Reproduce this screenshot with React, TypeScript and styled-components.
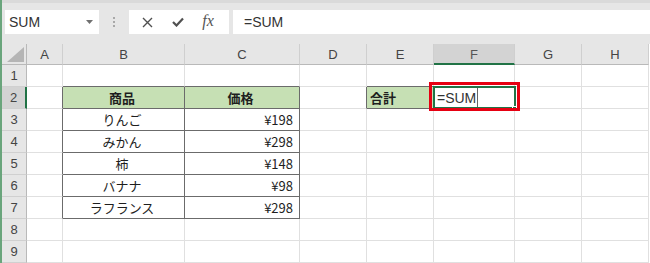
import React from "react";
import styled, { createGlobalStyle, css } from "styled-components";

const Global = createGlobalStyle`
  html, body { margin: 0; padding: 0; background: #ffffff; }
  body { width: 650px; height: 263px; overflow: hidden; }
`;

const Window = styled.div`
  display: flex;
  flex-direction: column;
  width: 650px;
  height: 263px;
  border-left: 2px solid #6aa57c;
  box-sizing: border-box;
  overflow: hidden;
  font-family: "Liberation Sans", Arial, sans-serif;
`;

const Toolbar = styled.div`
  display: flex;
  align-items: stretch;
  height: 44px;
  box-sizing: border-box;
  background: #e6e6e6;
  border-top: 3px solid #dadada;
  padding: 7px 0 10px 3px;
`;

const NameBox = styled.div`
  position: relative;
  width: 94px;
  background: #ffffff;
  display: flex;
  align-items: center;
  padding-left: 4px;
  box-sizing: border-box;
  font-size: 14px;
  color: #333;
`;

const Caret = styled.svg`
  position: absolute;
  right: 6px;
  top: 10px;
`;

const Grip = styled.div`
  width: 30px;
  display: flex;
  flex-direction: column;
  align-items: center;
  justify-content: center;
  gap: 2px;
  & > span {
    width: 2px;
    height: 2px;
    background: #a8a8a8;
  }
`;

const FxButtons = styled.div`
  width: 100px;
  background: #ffffff;
  display: flex;
  align-items: center;
  justify-content: space-around;
  padding: 0 6px 0 4px;
  box-sizing: border-box;
  color: #505050;
`;

const FxText = styled.span`
  font-family: "Liberation Serif", "Times New Roman", serif;
  font-style: italic;
  font-size: 16px;
  color: #555;
  margin-top: -2px;
`;

const FormulaInput = styled.div`
  flex: 1;
  margin-left: 4px;
  background: #ffffff;
  display: flex;
  align-items: center;
  padding-left: 11px;
  font-size: 14px;
  color: #333;
`;

const Sheet = styled.div`
  display: grid;
  grid-template-columns: 25px 36px 122px 115px 67px 67px 81px 67px 67px;
  grid-auto-rows: 22px;
  grid-template-rows: 21px;
`;

const ColHead = styled.div<{ $sel?: boolean }>`
  background: ${(p) => (p.$sel ? "#d3d3d3" : "#e6e6e6")};
  border-right: 1px solid #cfcfcf;
  border-bottom: ${(p) => (p.$sel ? "2px solid #217346" : "1px solid #b9b9b9")};
  box-sizing: border-box;
  display: flex;
  align-items: center;
  justify-content: center;
  font-size: 13px;
  color: ${(p) => (p.$sel ? "#555" : "#444")};
  padding-top: ${(p) => (p.$sel ? "1px" : "0")};
`;

const Corner = styled.div`
  background: #e6e6e6;
  border-right: 1px solid #b9b9b9;
  border-bottom: 1px solid #b9b9b9;
  box-sizing: border-box;
  display: flex;
  align-items: flex-end;
  justify-content: flex-end;
  padding: 0 2px 2px 0;
`;

const RowHead = styled.div<{ $sel?: boolean }>`
  background: ${(p) => (p.$sel ? "#d3d3d3" : "#e6e6e6")};
  border-right: ${(p) => (p.$sel ? "2px solid #217346" : "1px solid #b9b9b9")};
  border-bottom: 1px solid #d0d0d0;
  box-sizing: border-box;
  display: flex;
  align-items: center;
  justify-content: center;
  font-size: 13px;
  color: #444;
`;

type Align = "left" | "center" | "right";

const Cell = styled.div<{
  $align?: Align;
  $fill?: boolean;
  $bold?: boolean;
  $darkR?: boolean;
  $darkB?: boolean;
  $active?: boolean;
}>`
  position: relative;
  z-index: ${(p) => (p.$active ? 2 : "auto")};
  box-sizing: border-box;
  background: ${(p) => (p.$fill ? "#c6e0b4" : "#ffffff")};
  border-right: 1px solid ${(p) => (p.$darkR ? "#6b6b6b" : "#e0e0e0")};
  border-bottom: 1px solid ${(p) => (p.$darkB ? "#6b6b6b" : "#e0e0e0")};
  display: flex;
  align-items: center;
  justify-content: ${(p) =>
    p.$align === "right" ? "flex-end" : p.$align === "center" ? "center" : "flex-start"};
  padding: 0 6px 0 3px;
  font-family: "Noto Sans CJK JP", "Noto Sans", sans-serif;
  font-size: 13px;
  color: #1e1e1e;
  white-space: nowrap;
  ${(p) =>
    p.$bold &&
    css`
      font-weight: 700;
    `}
`;

const Selection = styled.div`
  position: absolute;
  left: -1px;
  top: -1px;
  right: -2px;
  bottom: -1px;
  border: 2px solid #217346;
  pointer-events: none;
`;

const Handle = styled.div`
  position: absolute;
  right: -3px;
  bottom: -3px;
  width: 5px;
  height: 5px;
  background: #217346;
  border: 1px solid #ffffff;
  box-sizing: border-box;
`;

const Annotation = styled.div`
  position: absolute;
  left: -5px;
  top: -5px;
  right: -6px;
  bottom: -3px;
  border: 3px solid #e60012;
  pointer-events: none;
`;

const EditText = styled.span`
  font-family: "Liberation Sans", Arial, sans-serif;
  font-size: 14px;
  color: #333;
  display: flex;
  align-items: center;
  height: 100%;
`;

const TextCursor = styled.span`
  display: inline-block;
  width: 1px;
  height: 20px;
  background: #666;
  margin-left: 1px;
`;

const COLS = ["A", "B", "C", "D", "E", "F", "G", "H"];

type CellData = {
  text?: string;
  align?: Align;
  fill?: boolean;
  bold?: boolean;
};

const data: Record<string, CellData> = {
  B2: { text: "商品", align: "center", fill: true, bold: true },
  C2: { text: "価格", align: "center", fill: true, bold: true },
  B3: { text: "りんご", align: "center" },
  C3: { text: "¥198", align: "right" },
  B4: { text: "みかん", align: "center" },
  C4: { text: "¥298", align: "right" },
  B5: { text: "柿", align: "center" },
  C5: { text: "¥148", align: "right" },
  B6: { text: "バナナ", align: "center" },
  C6: { text: "¥98", align: "right" },
  B7: { text: "ラフランス", align: "center" },
  C7: { text: "¥298", align: "right" },
  E2: { text: "合計", align: "left", fill: true, bold: true },
};

const boxed = (c: string, r: number) =>
  ((c === "B" || c === "C") && r >= 2 && r <= 7) || (c === "E" && r === 2);

export default function App() {
  const rows = Array.from({ length: 9 }, (_, i) => i + 1);
  return (
    <>
      <Global />
      <Window>
        <Toolbar>
          <NameBox>
            SUM
            <Caret width="7" height="4" viewBox="0 0 7 4">
              <path d="M0 0 L7 0 L3.5 4 Z" fill="#707070" />
            </Caret>
          </NameBox>
          <Grip>
            <span />
            <span />
            <span />
          </Grip>
          <FxButtons>
            <svg width="11" height="11" viewBox="0 0 11 11">
              <path d="M1 1 L10 10 M10 1 L1 10" stroke="#505050" strokeWidth="1.4" fill="none" />
            </svg>
            <svg width="12" height="10" viewBox="0 0 12 10">
              <path d="M1 5 L4.5 8.5 L11 1.5" stroke="#505050" strokeWidth="2.2" fill="none" />
            </svg>
            <FxText>fx</FxText>
          </FxButtons>
          <FormulaInput>=SUM</FormulaInput>
        </Toolbar>
        <Sheet>
          <Corner>
            <svg width="17" height="15" viewBox="0 0 17 15">
              <path d="M0 15 L17 15 L17 0 Z" fill="#b5b5b5" />
            </svg>
          </Corner>
          {COLS.map((c) => (
            <ColHead key={c} $sel={c === "F"}>
              {c}
            </ColHead>
          ))}
          {rows.map((r) => (
            <React.Fragment key={r}>
              <RowHead $sel={r === 2}>{r}</RowHead>
              {COLS.map((c, ci) => {
                const key = `${c}${r}`;
                const d = data[key];
                const next = COLS[ci + 1];
                const darkR = boxed(c, r) || (next !== undefined && boxed(next, r));
                const darkB = boxed(c, r) || boxed(c, r + 1);
                const isActive = key === "F2";
                return (
                  <Cell
                    key={key}
                    $align={d?.align}
                    $fill={d?.fill}
                    $bold={d?.bold}
                    $darkR={darkR}
                    $darkB={darkB}
                    $active={isActive}
                  >
                    {d?.text}
                    {isActive && (
                      <>
                        <EditText>
                          =SUM
                          <TextCursor />
                        </EditText>
                        <Selection />
                        <Handle />
                        <Annotation />
                      </>
                    )}
                  </Cell>
                );
              })}
            </React.Fragment>
          ))}
        </Sheet>
      </Window>
    </>
  );
}
